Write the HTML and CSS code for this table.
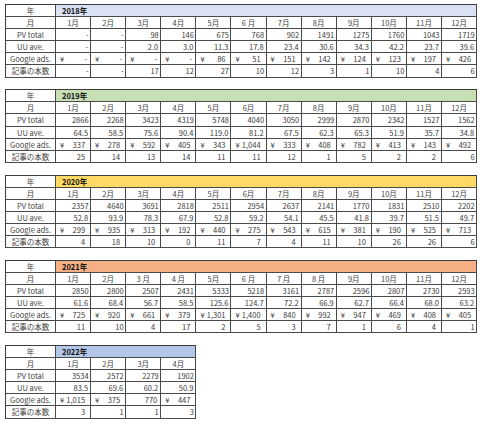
FILE: index.html
```html
<!DOCTYPE html>
<html lang="ja">
<head>
<meta charset="utf-8">
<title>ブログ実績</title>
<link rel="stylesheet" href="styles.css">
</head>
<body>
<div class="sheet">

  <div class="tbl y2018">
    <div class="c lab">年</div><div class="c yr">2018年</div>
    <div class="c lab">月</div><div class="c mo">1月</div><div class="c mo">2月</div><div class="c mo">3月</div><div class="c mo">4月</div><div class="c mo">5月</div><div class="c mo">6 月</div><div class="c mo">7月</div><div class="c mo">8月</div><div class="c mo">9月</div><div class="c mo">10月</div><div class="c mo">11月</div><div class="c mo">12月</div>
    <div class="c lab">PV total</div><div class="c n pv">-</div><div class="c n pv">-</div><div class="c n pv">98</div><div class="c n pv">146</div><div class="c n pv">675</div><div class="c n pv">768</div><div class="c n pv">902</div><div class="c n pv">1491</div><div class="c n pv">1275</div><div class="c n pv">1760</div><div class="c n pv">1043</div><div class="c n pv">1719</div>
    <div class="c lab">UU ave.</div><div class="c n uu">-</div><div class="c n uu">-</div><div class="c n uu">2.0</div><div class="c n uu">3.0</div><div class="c n uu">11.3</div><div class="c n uu">17.8</div><div class="c n uu">23.4</div><div class="c n uu">30.6</div><div class="c n uu">34.3</div><div class="c n uu">42.2</div><div class="c n uu">23.7</div><div class="c n uu">39.6</div>
    <div class="c lab">Google ads.</div><div class="c yen"><span>¥</span><span class="dash">-</span></div><div class="c yen"><span>¥</span><span class="dash">-</span></div><div class="c yen"><span>¥</span><span class="dash">-</span></div><div class="c yen"><span>¥</span><span class="dash">-</span></div><div class="c yen"><span>¥</span><span>86</span></div><div class="c yen"><span>¥</span><span>51</span></div><div class="c yen"><span>¥</span><span>151</span></div><div class="c yen"><span>¥</span><span>142</span></div><div class="c yen"><span>¥</span><span>124</span></div><div class="c yen"><span>¥</span><span>123</span></div><div class="c yen"><span>¥</span><span>197</span></div><div class="c yen"><span>¥</span><span>426</span></div>
    <div class="c lab">記事の本数</div><div class="c n cnt tight">-</div><div class="c n cnt tight">-</div><div class="c n cnt tight">17</div><div class="c n cnt tight">12</div><div class="c n cnt tight">27</div><div class="c n cnt tight">10</div><div class="c n cnt tight">12</div><div class="c n cnt tight">3</div><div class="c n cnt tight">1</div><div class="c n cnt tight">10</div><div class="c n cnt tight">4</div><div class="c n cnt tight">6</div>
  </div>

  <div class="tbl y2019">
    <div class="c lab">年</div><div class="c yr">2019年</div>
    <div class="c lab">月</div><div class="c mo">1月</div><div class="c mo">2月</div><div class="c mo">3月</div><div class="c mo">4月</div><div class="c mo">5月</div><div class="c mo">6月</div><div class="c mo">7月</div><div class="c mo">8月</div><div class="c mo">9月</div><div class="c mo">10月</div><div class="c mo">11月</div><div class="c mo">12月</div>
    <div class="c lab">PV total</div><div class="c n pv">2866</div><div class="c n pv">2268</div><div class="c n pv">3423</div><div class="c n pv">4319</div><div class="c n pv">5748</div><div class="c n pv">4040</div><div class="c n pv">3050</div><div class="c n pv">2999</div><div class="c n pv">2870</div><div class="c n pv">2342</div><div class="c n pv">1527</div><div class="c n pv">1562</div>
    <div class="c lab">UU ave.</div><div class="c n uu">64.5</div><div class="c n uu">58.5</div><div class="c n uu">75.6</div><div class="c n uu">90.4</div><div class="c n uu">119.0</div><div class="c n uu">81.2</div><div class="c n uu">67.5</div><div class="c n uu">62.3</div><div class="c n uu">65.3</div><div class="c n uu">51.9</div><div class="c n uu">35.7</div><div class="c n uu">34.8</div>
    <div class="c lab">Google ads.</div><div class="c yen"><span>¥</span><span>337</span></div><div class="c yen"><span>¥</span><span>278</span></div><div class="c yen"><span>¥</span><span>592</span></div><div class="c yen"><span>¥</span><span>405</span></div><div class="c yen"><span>¥</span><span>343</span></div><div class="c yen"><span>¥</span><span>1,044</span></div><div class="c yen"><span>¥</span><span>333</span></div><div class="c yen"><span>¥</span><span>408</span></div><div class="c yen"><span>¥</span><span>782</span></div><div class="c yen"><span>¥</span><span>413</span></div><div class="c yen"><span>¥</span><span>143</span></div><div class="c yen"><span>¥</span><span>492</span></div>
    <div class="c lab">記事の本数</div><div class="c n cnt">25</div><div class="c n cnt">14</div><div class="c n cnt">13</div><div class="c n cnt">14</div><div class="c n cnt">11</div><div class="c n cnt">11</div><div class="c n cnt">12</div><div class="c n cnt">1</div><div class="c n cnt">5</div><div class="c n cnt">2</div><div class="c n cnt">2</div><div class="c n cnt tight">6</div>
  </div>

  <div class="tbl y2020">
    <div class="c lab">年</div><div class="c yr">2020年</div>
    <div class="c lab">月</div><div class="c mo">1月</div><div class="c mo">2月</div><div class="c mo">3月</div><div class="c mo">4月</div><div class="c mo">5月</div><div class="c mo">6月</div><div class="c mo">7月</div><div class="c mo">8月</div><div class="c mo">9月</div><div class="c mo">10月</div><div class="c mo">11月</div><div class="c mo">12月</div>
    <div class="c lab">PV total</div><div class="c n pv">2357</div><div class="c n pv">4640</div><div class="c n pv">3691</div><div class="c n pv">2818</div><div class="c n pv">2511</div><div class="c n pv">2954</div><div class="c n pv">2637</div><div class="c n pv">2141</div><div class="c n pv">1770</div><div class="c n pv">1831</div><div class="c n pv">2510</div><div class="c n pv">2202</div>
    <div class="c lab">UU ave.</div><div class="c n uu">52.8</div><div class="c n uu">93.9</div><div class="c n uu">78.3</div><div class="c n uu">67.9</div><div class="c n uu">52.8</div><div class="c n uu">59.2</div><div class="c n uu">54.1</div><div class="c n uu">45.5</div><div class="c n uu">41.8</div><div class="c n uu">39.7</div><div class="c n uu">51.5</div><div class="c n uu">49.7</div>
    <div class="c lab">Google ads.</div><div class="c yen"><span>¥</span><span>299</span></div><div class="c yen"><span>¥</span><span>935</span></div><div class="c yen"><span>¥</span><span>313</span></div><div class="c yen"><span>¥</span><span>192</span></div><div class="c yen"><span>¥</span><span>440</span></div><div class="c yen"><span>¥</span><span>275</span></div><div class="c yen"><span>¥</span><span>543</span></div><div class="c yen"><span>¥</span><span>615</span></div><div class="c yen"><span>¥</span><span>381</span></div><div class="c yen"><span>¥</span><span>190</span></div><div class="c yen"><span>¥</span><span>525</span></div><div class="c yen"><span>¥</span><span>713</span></div>
    <div class="c lab">記事の本数</div><div class="c n cnt">4</div><div class="c n cnt">18</div><div class="c n cnt">10</div><div class="c n cnt">0</div><div class="c n cnt">11</div><div class="c n cnt">7</div><div class="c n cnt">4</div><div class="c n cnt">11</div><div class="c n cnt">10</div><div class="c n cnt">26</div><div class="c n cnt">26</div><div class="c n cnt tight">6</div>
  </div>

  <div class="tbl y2021">
    <div class="c lab">年</div><div class="c yr">2021年</div>
    <div class="c lab">月</div><div class="c mo">1月</div><div class="c mo">2月</div><div class="c mo">3 月</div><div class="c mo">4 月</div><div class="c mo">5月</div><div class="c mo">6 月</div><div class="c mo">7 月</div><div class="c mo">8 月</div><div class="c mo">9月</div><div class="c mo">10月</div><div class="c mo">11月</div><div class="c mo">12月</div>
    <div class="c lab">PV total</div><div class="c n pv">2850</div><div class="c n pv">2800</div><div class="c n pv">2507</div><div class="c n pv">2431</div><div class="c n pv">5333</div><div class="c n pv">5218</div><div class="c n pv">3161</div><div class="c n pv">2787</div><div class="c n pv">2596</div><div class="c n pv">2807</div><div class="c n pv">2730</div><div class="c n pv">2593</div>
    <div class="c lab">UU ave.</div><div class="c n uu">61.6</div><div class="c n uu">68.4</div><div class="c n uu">56.7</div><div class="c n uu">58.5</div><div class="c n uu">125.6</div><div class="c n uu">124.7</div><div class="c n uu">72.2</div><div class="c n uu">66.9</div><div class="c n uu">62.7</div><div class="c n uu">66.4</div><div class="c n uu">68.0</div><div class="c n uu">63.2</div>
    <div class="c lab">Google ads.</div><div class="c yen"><span>¥</span><span>725</span></div><div class="c yen"><span>¥</span><span>920</span></div><div class="c yen"><span>¥</span><span>661</span></div><div class="c yen"><span>¥</span><span>379</span></div><div class="c yen"><span>¥</span><span>1,301</span></div><div class="c yen"><span>¥</span><span>1,400</span></div><div class="c yen"><span>¥</span><span>840</span></div><div class="c yen"><span>¥</span><span>992</span></div><div class="c yen"><span>¥</span><span>947</span></div><div class="c yen"><span>¥</span><span>469</span></div><div class="c yen"><span>¥</span><span>408</span></div><div class="c yen"><span>¥</span><span>405</span></div>
    <div class="c lab">記事の本数</div><div class="c n cnt">11</div><div class="c n cnt tight">10</div><div class="c n cnt">4</div><div class="c n cnt">17</div><div class="c n cnt">2</div><div class="c n cnt">5</div><div class="c n cnt">3</div><div class="c n cnt">7</div><div class="c n cnt">1</div><div class="c n cnt">6</div><div class="c n cnt">4</div><div class="c n cnt tight">1</div>
  </div>

  <div class="tbl m4 y2022">
    <div class="c lab">年</div><div class="c yr">2022年</div>
    <div class="c lab">月</div><div class="c mo">1月</div><div class="c mo">2月</div><div class="c mo">3月</div><div class="c mo">4月</div>
    <div class="c lab">PV total</div><div class="c n pv">3534</div><div class="c n pv">2572</div><div class="c n pv">2279</div><div class="c n pv">1902</div>
    <div class="c lab">UU ave.</div><div class="c n uu">83.5</div><div class="c n uu">69.6</div><div class="c n uu">60.2</div><div class="c n uu">50.9</div>
    <div class="c lab">Google ads.</div><div class="c yen"><span>¥</span><span>1,015</span></div><div class="c yen"><span>¥</span><span>375</span></div><div class="c n plain">770</div><div class="c yen"><span>¥</span><span>447</span></div>
    <div class="c lab">記事の本数</div><div class="c n cnt">3</div><div class="c n cnt tight">1</div><div class="c n cnt tight">1</div><div class="c n cnt tight">3</div>
  </div>

</div>
</body>
</html>
```

FILE: styles.css
```css
html, body {
  margin: 0;
  padding: 0;
  background: #ffffff;
}

body {
  font-family: "Noto Sans CJK JP", "Noto Sans", sans-serif;
  font-size: 7.5px;
  color: #3a3a3a;
}

.sheet {
  display: flex;
  flex-direction: column;
  align-items: flex-start;
  gap: 11.7px;
  padding: 4px 0 0 5px;
}

.tbl {
  display: grid;
  grid-template-columns: 50px repeat(12, 35.1px);
  grid-auto-rows: 12.1px;
  border-top: 1px solid #3c3c3c;
  border-left: 1px solid #3c3c3c;
}

.tbl.m4 {
  grid-template-columns: 50px repeat(4, 35.1px);
}

.c {
  box-sizing: border-box;
  border-right: 1px solid #4a4a4a;
  border-bottom: 1px solid #4a4a4a;
  line-height: 11px;
  white-space: nowrap;
  overflow: hidden;
}

.lab {
  text-align: center;
  color: #444;
}

.mo {
  text-align: center;
  color: #444;
}

.yr {
  grid-column: 2 / -1;
  font-weight: 700;
  color: #111;
  padding-left: 6px;
}

.y2018 .yr { background: #d9e1f2; }
.y2019 .yr { background: #c6e0b4; }
.y2020 .yr { background: #ffd966; }
.y2021 .yr { background: #f4b084; }
.y2022 .yr { background: #b4c6e7; }

.n {
  text-align: right;
}

.pv { padding-right: 1.5px; }
.uu { padding-right: 2px; }
.cnt { padding-right: 5px; }
.cnt.tight { padding-right: 1.5px; }
.plain { padding-right: 3px; }

.yen {
  display: flex;
  justify-content: space-between;
  padding: 0 5px 0 4px;
}

.yen .dash {
  margin-right: -2px;
}
```
